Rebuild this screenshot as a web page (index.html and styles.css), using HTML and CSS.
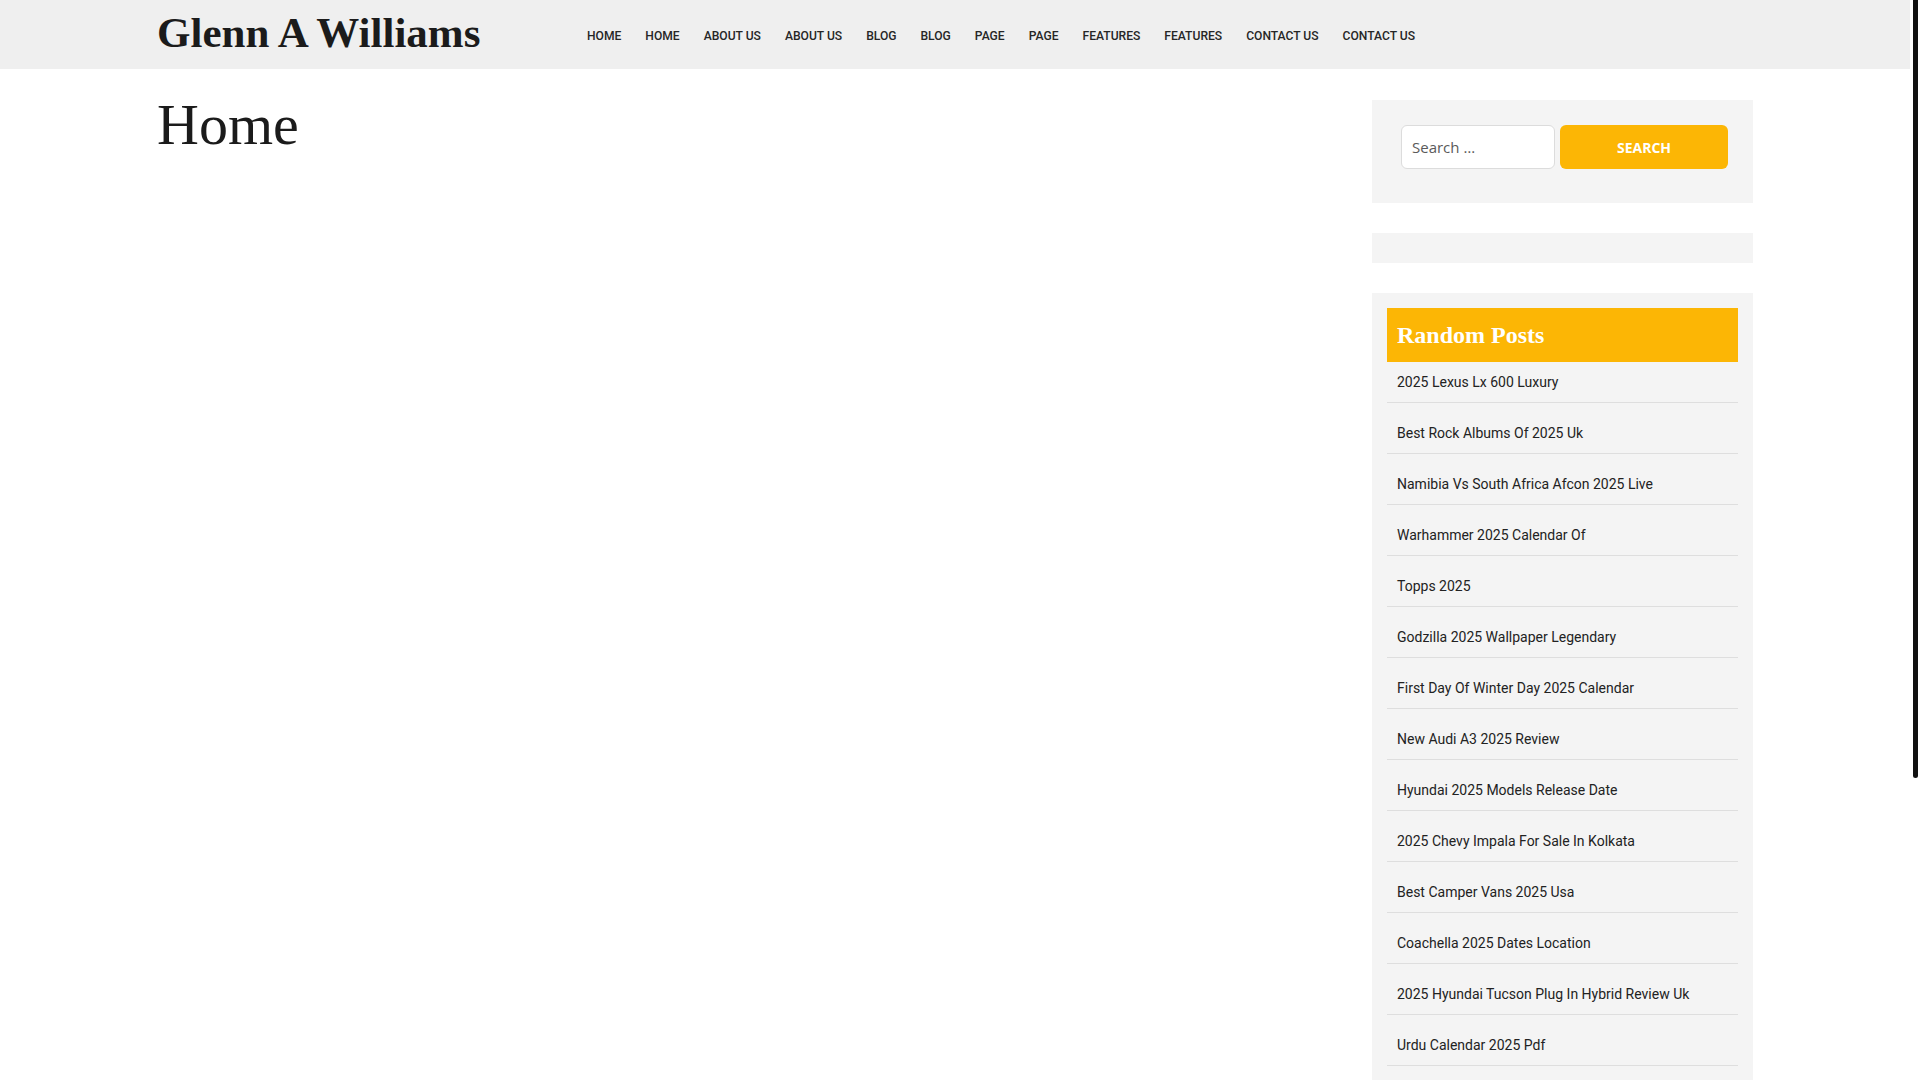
FILE: index.html
```html
<!DOCTYPE html>
<html lang="en">
<head>
<meta charset="utf-8">
<title>Home – Glenn A Williams</title>
<link rel="stylesheet" href="styles.css">
</head>
<body>
<header class="site-header">
  <div class="container header-inner">
    <div class="site-branding">
      <a class="site-title" href="#">Glenn A Williams</a>
    </div>
    <nav class="main-nav">
      <ul class="menu">
        <li><a href="#">Home</a></li>
        <li><a href="#">Home</a></li>
        <li><a href="#">About Us</a></li>
        <li><a href="#">About Us</a></li>
        <li><a href="#">Blog</a></li>
        <li><a href="#">Blog</a></li>
        <li><a href="#">Page</a></li>
        <li><a href="#">Page</a></li>
        <li><a href="#">Features</a></li>
        <li><a href="#">Features</a></li>
        <li><a href="#">Contact Us</a></li>
        <li><a href="#">Contact Us</a></li>
      </ul>
    </nav>
  </div>
</header>

<div class="container site-content">
  <main class="content-area">
    <h1 class="page-title">Home</h1>
  </main>

  <aside class="sidebar">
    <section class="widget widget-search">
      <form class="search-form" action="#">
        <input class="search-field" type="search" placeholder="Search …">
        <button class="search-submit" type="button">Search</button>
      </form>
    </section>

    <section class="widget widget-empty"></section>

    <section class="widget widget-posts">
      <h2 class="widget-title">Random Posts</h2>
      <ul class="post-list">
        <li><a href="#">2025 Lexus Lx 600 Luxury</a></li>
        <li><a href="#">Best Rock Albums Of 2025 Uk</a></li>
        <li><a href="#">Namibia Vs South Africa Afcon 2025 Live</a></li>
        <li><a href="#">Warhammer 2025 Calendar Of</a></li>
        <li><a href="#">Topps 2025</a></li>
        <li><a href="#">Godzilla 2025 Wallpaper Legendary</a></li>
        <li><a href="#">First Day Of Winter Day 2025 Calendar</a></li>
        <li><a href="#">New Audi A3 2025 Review</a></li>
        <li><a href="#">Hyundai 2025 Models Release Date</a></li>
        <li><a href="#">2025 Chevy Impala For Sale In Kolkata</a></li>
        <li><a href="#">Best Camper Vans 2025 Usa</a></li>
        <li><a href="#">Coachella 2025 Dates Location</a></li>
        <li><a href="#">2025 Hyundai Tucson Plug In Hybrid Review Uk</a></li>
        <li><a href="#">Urdu Calendar 2025 Pdf</a></li>
      </ul>
    </section>
  </aside>
</div>

<div class="scrollbar" aria-hidden="true"><div class="scrollbar-thumb"></div></div>
</body>
</html>
```

FILE: styles.css
```css
html {
  background: #ffffff;
}

body {
  margin: 0 10px 0 0;
  background: #ffffff;
  color: #222222;
  font-family: "Open Sans", "Liberation Sans", sans-serif;
  font-size: 15px;
}

a {
  color: inherit;
  text-decoration: none;
}

.container {
  max-width: 1596px;
  margin: 0 auto;
}

/* Header */
.site-header {
  background: #efefef;
  height: 69px;
}

.header-inner {
  display: flex;
  align-items: center;
  height: 69px;
}

.site-branding {
  flex: 0 0 418px;
  padding-bottom: 4px;
}

.site-title {
  font-family: "Liberation Serif", "Times New Roman", serif;
  font-weight: 700;
  font-size: 43px;
  line-height: 42px;
  color: #1b1b1b;
  display: block;
}

.main-nav {
  padding-top: 2px;
}

.menu {
  list-style: none;
  margin: 0;
  padding: 0;
  display: flex;
}

.menu a {
  display: block;
  padding: 0 12px;
  font-family: Roboto, "Liberation Sans", sans-serif;
  font-weight: 500;
  font-size: 12.1px;
  line-height: 16px;
  text-transform: uppercase;
  color: #262626;
}

/* Content */
.site-content {
  display: grid;
  grid-template-columns: 1fr 381px;
  column-gap: 30px;
  padding-top: 31px;
  padding-bottom: 60px;
}

.page-title {
  margin: 0;
  font-family: "Liberation Serif", "Times New Roman", serif;
  font-weight: 400;
  font-size: 58px;
  line-height: 50px;
  color: #1b1b1b;
}

/* Sidebar */
.sidebar {
  display: flex;
  flex-direction: column;
  gap: 30px;
}

.widget {
  background: #f4f4f4;
}

.widget-search {
  padding: 25px 25px 34px 29px;
}

.search-form {
  display: grid;
  grid-template-columns: 154px 1fr;
  column-gap: 5px;
}

.search-field {
  width: 154px;
  min-width: 0;
  box-sizing: border-box;
  height: 44px;
  margin: 0;
  padding: 0 10px;
  border: 1px solid #dcdcdc;
  border-radius: 6px;
  background: #ffffff;
  font-family: "Open Sans", "Liberation Sans", sans-serif;
  font-size: 15px;
  color: #555555;
  outline: none;
}

.search-field::placeholder {
  color: #5a5a5a;
}

.search-submit {
  width: 100%;
  height: 44px;
  margin: 0;
  border: 0;
  border-radius: 6px;
  background: #fcb605;
  color: #ffffff;
  font-family: "Open Sans", "Liberation Sans", sans-serif;
  font-weight: 700;
  font-size: 14px;
  text-transform: uppercase;
  cursor: pointer;
}

.widget-empty {
  height: 30px;
}

.widget-posts {
  padding: 15px;
}

.widget-title {
  margin: 0;
  height: 54px;
  display: flex;
  align-items: center;
  padding: 0 10px;
  background: #fcb605;
  color: #ffffff;
  font-family: "Liberation Serif", "Times New Roman", serif;
  font-weight: 700;
  font-size: 24px;
}

.post-list {
  list-style: none;
  margin: 0;
  padding: 0;
}

.post-list li {
  padding: 8px 10px;
  border-bottom: 1px solid #dedede;
  font-family: Roboto, "Liberation Sans", sans-serif;
  font-size: 14px;
  line-height: 24px;
  color: #222222;
}

.post-list li + li {
  margin-top: 10px;
}

/* Scrollbar drawn over the right edge */
.scrollbar {
  position: fixed;
  top: 0;
  right: 0;
  width: 10px;
  height: 100vh;
  background: #ffffff;
}

.scrollbar-thumb {
  width: 5px;
  height: 778px;
  margin-left: 3px;
  background: #111111;
  border-radius: 0 0 3px 3px;
}
```
